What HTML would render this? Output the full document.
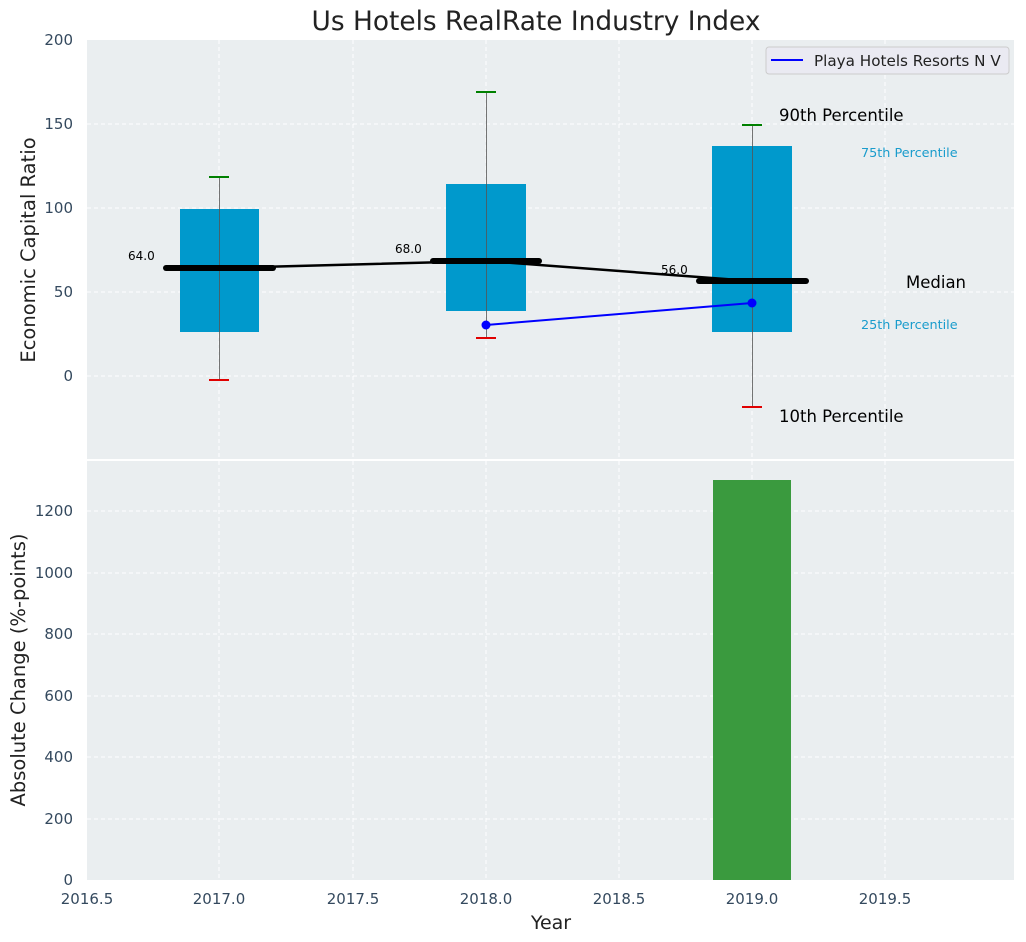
<!DOCTYPE html>
<html><head><meta charset="utf-8"><style>
html,body{margin:0;padding:0;background:#fff;}
svg{display:block;font-family:"DejaVu Sans","Liberation Sans",sans-serif;}
</style></head><body>
<svg width="1026" height="942" viewBox="0 0 1026 942" xmlns="http://www.w3.org/2000/svg">
<rect width="1026" height="942" fill="#fff"/>
<rect x="87" y="40" width="927" height="419" fill="#eaeef0"/>
<rect x="87" y="461" width="927" height="419" fill="#eaeef0"/>
<g stroke="#fff" stroke-width="1" stroke-dasharray="4,3" fill="none">
<line x1="87" x2="1014" y1="124" y2="124"/><line x1="87" x2="1014" y1="208" y2="208"/>
<line x1="87" x2="1014" y1="292" y2="292"/><line x1="87" x2="1014" y1="376" y2="376"/>
<line x1="87" x2="1014" y1="511" y2="511"/><line x1="87" x2="1014" y1="573" y2="573"/>
<line x1="87" x2="1014" y1="634" y2="634"/><line x1="87" x2="1014" y1="696" y2="696"/>
<line x1="87" x2="1014" y1="757" y2="757"/><line x1="87" x2="1014" y1="819" y2="819"/>
<line y1="40" y2="459" x1="219" x2="219"/><line y1="40" y2="459" x1="353" x2="353"/>
<line y1="40" y2="459" x1="486" x2="486"/><line y1="40" y2="459" x1="619" x2="619"/>
<line y1="40" y2="459" x1="752" x2="752"/><line y1="40" y2="459" x1="885" x2="885"/>
<line y1="461" y2="880" x1="219" x2="219"/><line y1="461" y2="880" x1="353" x2="353"/>
<line y1="461" y2="880" x1="486" x2="486"/><line y1="461" y2="880" x1="619" x2="619"/>
<line y1="461" y2="880" x1="752" x2="752"/><line y1="461" y2="880" x1="885" x2="885"/>
</g>
<rect x="180" y="209" width="79" height="123" fill="#0099cc"/>
<rect x="446" y="184" width="80" height="127" fill="#0099cc"/>
<rect x="712" y="146" width="80" height="186" fill="#0099cc"/>
<g stroke="#555" stroke-width="1" opacity="0.8">
<line x1="219.5" x2="219.5" y1="177" y2="380"/>
<line x1="486.5" x2="486.5" y1="92" y2="338"/>
<line x1="752.5" x2="752.5" y1="125" y2="407"/>
</g>
<g stroke="#008000" stroke-width="2"><line x1="209" x2="229" y1="177" y2="177"/><line x1="476" x2="496" y1="92" y2="92"/><line x1="742" x2="762" y1="125" y2="125"/></g>
<g stroke="#e00000" stroke-width="2"><line x1="209" x2="229" y1="380" y2="380"/><line x1="476" x2="496" y1="338" y2="338"/><line x1="742" x2="762" y1="407" y2="407"/></g>
<polyline points="219,268 486,261 752,281" fill="none" stroke="#000" stroke-width="2.5"/>
<g stroke="#000" stroke-width="6" stroke-linecap="round">
<line x1="166" x2="273" y1="268" y2="268"/><line x1="433" x2="539" y1="261" y2="261"/><line x1="699" x2="806" y1="281" y2="281"/>
</g>
<g font-size="12" fill="#000"><text x="128" y="260">64.0</text><text x="395" y="253">68.0</text><text x="661" y="274">56.0</text></g>
<polyline points="486,325 752,303" fill="none" stroke="#0000ff" stroke-width="2"/>
<circle cx="486" cy="325" r="4.5" fill="#0000ff"/><circle cx="752" cy="303" r="4.5" fill="#0000ff"/>
<g font-size="16.5" fill="#000"><text x="779" y="121">90th Percentile</text><text x="906" y="288">Median</text><text x="779" y="422">10th Percentile</text></g>
<g font-size="12.8" fill="#1a9ccc"><text x="861" y="157">75th Percentile</text><text x="861" y="329">25th Percentile</text></g>
<rect x="766" y="47" width="243" height="27" rx="3" fill="#eaeaf2" stroke="#ccc"/>
<line x1="771" x2="803" y1="60" y2="60" stroke="#0000ff" stroke-width="2"/>
<text x="814" y="66" font-size="15.2" fill="#222">Playa Hotels Resorts N V</text>
<rect x="713" y="480" width="78" height="400" fill="#3a9a3e"/>
<line x1="87" x2="1014" y1="460" y2="460" stroke="#fff" stroke-width="2"/>
<g font-size="15" fill="#34495e" text-anchor="end">
<text x="73" y="45">200</text><text x="73" y="129">150</text><text x="73" y="213">100</text><text x="73" y="297">50</text><text x="73" y="381">0</text>
<text x="73" y="516">1200</text><text x="73" y="578">1000</text><text x="73" y="639">800</text><text x="73" y="701">600</text><text x="73" y="762">400</text><text x="73" y="824">200</text><text x="73" y="885">0</text>
</g>
<g font-size="15" fill="#34495e" text-anchor="middle">
<text x="87" y="904">2016.5</text><text x="219" y="904">2017.0</text><text x="353" y="904">2017.5</text><text x="486" y="904">2018.0</text><text x="619" y="904">2018.5</text><text x="752" y="904">2019.0</text><text x="885" y="904">2019.5</text>
</g>
<text x="536" y="30" font-size="26.4" fill="#222" text-anchor="middle">Us Hotels RealRate Industry Index</text>
<text x="551" y="929" font-size="19" fill="#222" text-anchor="middle">Year</text>
<text transform="translate(35,250) rotate(-90)" font-size="19.5" fill="#222" text-anchor="middle">Economic Capital Ratio</text>
<text transform="translate(25,670) rotate(-90)" font-size="19.5" fill="#222" text-anchor="middle">Absolute Change (%-points)</text>
</svg>
</body></html>
